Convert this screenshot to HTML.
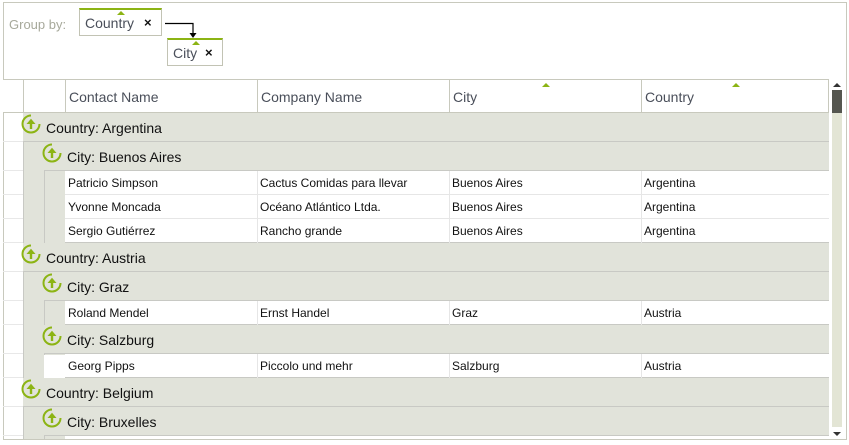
<!DOCTYPE html>
<html><head><meta charset="utf-8"><style>
*{box-sizing:border-box;margin:0;padding:0}
body{width:849px;height:445px;background:#fff;font-family:"Segoe UI","Liberation Sans",sans-serif;position:relative;overflow:hidden;color:#000}
.a{position:absolute}
.outer{left:3px;top:2px;width:844px;height:438px;border:1px solid #c8c9bd}
.gb{left:9px;top:17px;font-size:13px;color:#a7a99b}
.chip{border:1px solid #c2c3b4;border-top:2px solid #8cb414;height:28px;background:#fff;font-size:14px;color:#4a4f5a}
.chip .t{position:absolute;top:5px}
.chip .x{position:absolute;top:5px;font-size:13px;font-weight:bold;color:#111}
.tri{width:0;height:0;border-left:4px solid transparent;border-right:4px solid transparent;border-bottom:4px solid #8cb414}
.hdr{top:79px;height:34px;border-top:1px solid #c8c9bd;border-bottom:1px solid #c8c9bd;background:#fff}
.hc{top:79px;height:34px;border-left:1px solid #c8c9bd;font-size:14px;color:#4a4f5a;padding:10px 0 0 3px}
.g{left:3px;top:113px;width:826px;height:326px;overflow:hidden}
.row{position:absolute;left:0;width:826px}
.cr{background:#e1e3da;border-bottom:1px solid #c8c9c4;height:29px;font-size:14px;color:#111}
.dr{background:#fff;height:24px;border-bottom:1px solid #e6e6e6;font-size:12px;color:#111}
.dr span{position:absolute;top:5px}
.ind{position:absolute;top:0;background:#e1e3da;border-left:1px solid #c8c9c4}
.lg{position:absolute;left:0;width:20px;border-bottom:1px solid #e8e8e8}
.cr span{top:7px!important}
</style></head><body>
<div class="a outer"></div>
<div class="a gb">Group by:</div>
<div class="a chip" style="left:79px;top:8px;width:83px"><div class="a tri" style="left:37px;top:1px"></div><span class="t" style="left:5px">Country</span><span class="x" style="left:64px">×</span></div>
<svg class="a" style="left:162px;top:18px" width="40" height="24"><path d="M3 5.5H31V17" stroke="#000" fill="none" stroke-width="1.2"/><path d="M27.5 15L31 20L34.5 15Z" fill="#000"/></svg>
<div class="a chip" style="left:167px;top:38px;width:56px"><div class="a tri" style="left:24px;top:1px"></div><span class="t" style="left:5px">City</span><span class="x" style="left:37px">×</span></div>

<div class="a hdr" style="left:3px;width:826px"></div>
<div class="a hc" style="left:23px;width:42px"></div>
<div class="a hc" style="left:65px;width:192px">Contact Name</div>
<div class="a hc" style="left:257px;width:192px">Company Name</div>
<div class="a hc" style="left:449px;width:192px">City</div>
<div class="a hc" style="left:641px;width:188px;border-right:1px solid #c8c9bd">Country</div>
<div class="a tri" style="left:542px;top:83px"></div>
<div class="a tri" style="left:732px;top:83px"></div>

<div class="a" style="left:829px;top:80px;width:17px;height:359px;background:#fff"></div>
<div class="a" style="left:832px;top:113px;width:10px;height:314px;background:#e3e5d5"></div>
<div class="a" style="left:832px;top:90px;width:10px;height:23px;background:#55564f"></div>
<div class="a" style="left:833px;top:83px;width:0;height:0;border-left:4px solid transparent;border-right:4px solid transparent;border-bottom:4px solid #333"></div>
<div class="a" style="left:833px;top:432px;width:0;height:0;border-left:4px solid transparent;border-right:4px solid transparent;border-top:4px solid #333"></div>

<div class="a g">
<div class="lg" style="top:0;height:29px"></div><div class="lg" style="top:29px;height:29px"></div><div class="lg" style="top:58px;height:24px"></div><div class="lg" style="top:82px;height:24px"></div><div class="lg" style="top:106px;height:24px"></div><div class="lg" style="top:130px;height:29px"></div><div class="lg" style="top:159px;height:29px"></div><div class="lg" style="top:188px;height:24px"></div><div class="lg" style="top:212px;height:29px"></div><div class="lg" style="top:241px;height:24px"></div><div class="lg" style="top:265px;height:29px"></div><div class="lg" style="top:294px;height:29px"></div>
<div class="ind" style="left:20px;width:21px;height:326px"></div>
<div class="ind" style="left:41px;width:21px;top:29px;height:101px"></div>
<div class="ind" style="left:41px;width:21px;top:159px;height:83px"></div>
<div class="ind" style="left:41px;width:21px;top:294px;height:40px"></div>

<div class="row cr" style="top:0;left:20px;width:806px"><span class="a" style="left:23px">Country: Argentina</span></div>
<div class="row cr" style="top:29px;left:41px;width:785px"><span class="a" style="left:23px">City: Buenos Aires</span></div>
<div class="row dr" style="top:58px;left:62px;width:764px"><span style="left:3px">Patricio Simpson</span><span style="left:195px">Cactus Comidas para llevar</span><span style="left:387px">Buenos Aires</span><span style="left:579px">Argentina</span></div>
<div class="row dr" style="top:82px;left:62px;width:764px"><span style="left:3px">Yvonne Moncada</span><span style="left:195px">Océano Atlántico Ltda.</span><span style="left:387px">Buenos Aires</span><span style="left:579px">Argentina</span></div>
<div class="row dr" style="top:106px;left:62px;width:764px;border-bottom-color:#c8c9c4"><span style="left:3px">Sergio Gutiérrez</span><span style="left:195px">Rancho grande</span><span style="left:387px">Buenos Aires</span><span style="left:579px">Argentina</span></div>
<div class="row cr" style="top:130px;left:20px;width:806px"><span class="a" style="left:23px">Country: Austria</span></div>
<div class="row cr" style="top:159px;left:41px;width:785px"><span class="a" style="left:23px">City: Graz</span></div>
<div class="row dr" style="top:188px;left:62px;width:764px;border-bottom-color:#c8c9c4"><span style="left:3px">Roland Mendel</span><span style="left:195px">Ernst Handel</span><span style="left:387px">Graz</span><span style="left:579px">Austria</span></div>
<div class="row cr" style="top:212px;left:41px;width:785px"><span class="a" style="left:23px">City: Salzburg</span></div>
<div class="row dr" style="top:241px;left:62px;width:764px;border-bottom-color:#c8c9c4"><span style="left:3px">Georg Pipps</span><span style="left:195px">Piccolo und mehr</span><span style="left:387px">Salzburg</span><span style="left:579px">Austria</span></div>
<div class="row cr" style="top:265px;left:20px;width:806px"><span class="a" style="left:23px">Country: Belgium</span></div>
<div class="row cr" style="top:294px;left:41px;width:785px"><span class="a" style="left:23px">City: Bruxelles</span></div>
<div class="row dr" style="top:323px;left:62px;width:764px"></div>
<div class="a" style="left:254px;top:58px;width:1px;height:72px;background:#e6e6e6"></div>
<div class="a" style="left:446px;top:58px;width:1px;height:72px;background:#e6e6e6"></div>
<div class="a" style="left:638px;top:58px;width:1px;height:72px;background:#e6e6e6"></div>
<div class="a" style="left:254px;top:188px;width:1px;height:24px;background:#e6e6e6"></div>
<div class="a" style="left:446px;top:188px;width:1px;height:24px;background:#e6e6e6"></div>
<div class="a" style="left:638px;top:188px;width:1px;height:24px;background:#e6e6e6"></div>
<div class="a" style="left:254px;top:241px;width:1px;height:24px;background:#e6e6e6"></div>
<div class="a" style="left:446px;top:241px;width:1px;height:24px;background:#e6e6e6"></div>
<div class="a" style="left:638px;top:241px;width:1px;height:24px;background:#e6e6e6"></div>
<svg class="a" style="left:18px;top:1px" width="20" height="20"><use href="#ic"/></svg>
<svg class="a" style="left:39px;top:30px" width="20" height="20"><use href="#ic"/></svg>
<svg class="a" style="left:18px;top:131px" width="20" height="20"><use href="#ic"/></svg>
<svg class="a" style="left:39px;top:160px" width="20" height="20"><use href="#ic"/></svg>
<svg class="a" style="left:39px;top:213px" width="20" height="20"><use href="#ic"/></svg>
<svg class="a" style="left:18px;top:266px" width="20" height="20"><use href="#ic"/></svg>
<svg class="a" style="left:39px;top:295px" width="20" height="20"><use href="#ic"/></svg>
</div>
<svg width="0" height="0" style="position:absolute"><defs><g id="ic"><path d="M10 1.5A8.5 8.5 0 1 0 18.5 10" stroke="#8cb414" stroke-width="2" fill="none"/><path d="M10 15V7.5" stroke="#8cb414" stroke-width="2.4"/><path d="M5.5 10L10 4.8L14.5 10Z" fill="#8cb414"/></g></defs></svg>
</body></html>
